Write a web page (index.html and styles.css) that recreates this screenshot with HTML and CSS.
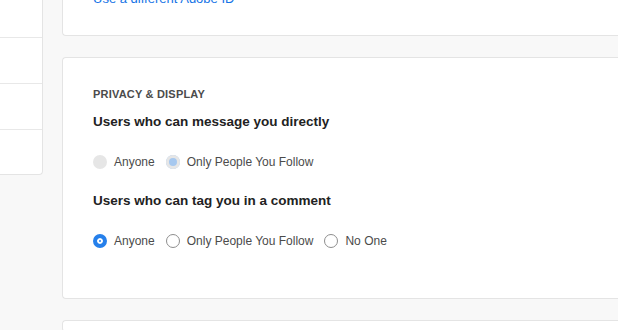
FILE: index.html
```html
<!DOCTYPE html>
<html lang="en">

<head>
    <meta charset="UTF-8">
    <meta name="viewport" content="width=device-width, initial-scale=1.0">
    <title>Privacy &amp; Display</title>
    <link rel="stylesheet" href="styles.css">
</head>

<body>
    <nav class="sidebar">
        <div class="side-item"></div>
        <div class="side-item"></div>
        <div class="side-item"></div>
        <div class="side-item"></div>
    </nav>

    <main class="content">
        <section class="card card-top">
            <a class="link" href="#">Use a different Adobe ID</a>
        </section>

        <section class="card card-privacy">
            <h2 class="section-title">Privacy &amp; Display</h2>

            <h3 class="question">Users who can message you directly</h3>
            <div class="options">
                <label class="option"><input type="radio" name="message" disabled> Anyone</label>
                <label class="option"><input type="radio" name="message" checked disabled> Only People You Follow</label>
            </div>

            <h3 class="question">Users who can tag you in a comment</h3>
            <div class="options">
                <label class="option"><input type="radio" name="tag" checked> Anyone</label>
                <label class="option"><input type="radio" name="tag"> Only People You Follow</label>
                <label class="option"><input type="radio" name="tag"> No One</label>
            </div>
        </section>

        <section class="card card-next"></section>
    </main>
</body>

</html>
```

FILE: styles.css
```css
/* General */
body {
    margin: 0;
    background-color: #f8f8f8;
    font-family: "Liberation Sans", Arial, sans-serif;
    color: #2c2c2c;
    display: flex;
    gap: 19px;
    height: 330px;
    overflow: hidden;
}

/* Sidebar */
.sidebar {
    width: 42px;
    height: 174px;
    background-color: #fff;
    border-right: 1px solid #e4e4e4;
    border-bottom: 1px solid #e4e4e4;
    border-bottom-right-radius: 4px;
    flex-shrink: 0;
}

.side-item {
    height: 45px;
    border-bottom: 1px solid #e8e8e8;
}

.side-item:first-child {
    height: 37px;
}

.side-item:last-child {
    border-bottom: none;
}

/* Cards */
.content {
    flex: 1;
    display: flex;
    flex-direction: column;
    gap: 21px;
}

.card {
    flex-shrink: 0;
    background-color: #fff;
    border: 1px solid #e4e4e4;
    border-right: none;
    border-radius: 4px 0 0 4px;
}

.card-top {
    margin-top: -40px;
    height: 75px;
    padding: 0 30px;
    border-top: none;
}

.link {
    display: block;
    margin-top: 31px;
    font-size: 13px;
    color: #1473e6;
    text-decoration: none;
}

.card-privacy {
    height: 240px;
    padding: 0 30px;
}

.card-next {
    height: 10px;
}

.section-title {
    margin: 30px 0 0;
    font-size: 11px;
    font-weight: bold;
    text-transform: uppercase;
    color: #4b4b4b;
    letter-spacing: 0.2px;
}

.question {
    margin: 14px 0 0;
    font-size: 13.5px;
    font-weight: bold;
    color: #222;
}

.options {
    display: flex;
    gap: 11px;
    margin-top: 26px;
    margin-bottom: 24px;
}

.option {
    display: flex;
    align-items: center;
    gap: 7px;
    font-size: 12px;
    color: #4b4b4b;
}

/* Radios */
.option input {
    appearance: none;
    margin: 0;
    width: 14px;
    height: 14px;
    border-radius: 50%;
    border: 1px solid #8e8e8e;
    background-color: #fff;
}

.option input:checked {
    border: 4px solid #2680eb;
    box-shadow: inset 0 0 0 2px #fff;
    background-color: #2680eb;
}

.option input:disabled {
    border: none;
    background-color: #e6e6e6;
}

.option input:disabled:checked {
    background-color: #a6c8ef;
    box-shadow: inset 0 0 0 3px #e6e6e6;
}
```
